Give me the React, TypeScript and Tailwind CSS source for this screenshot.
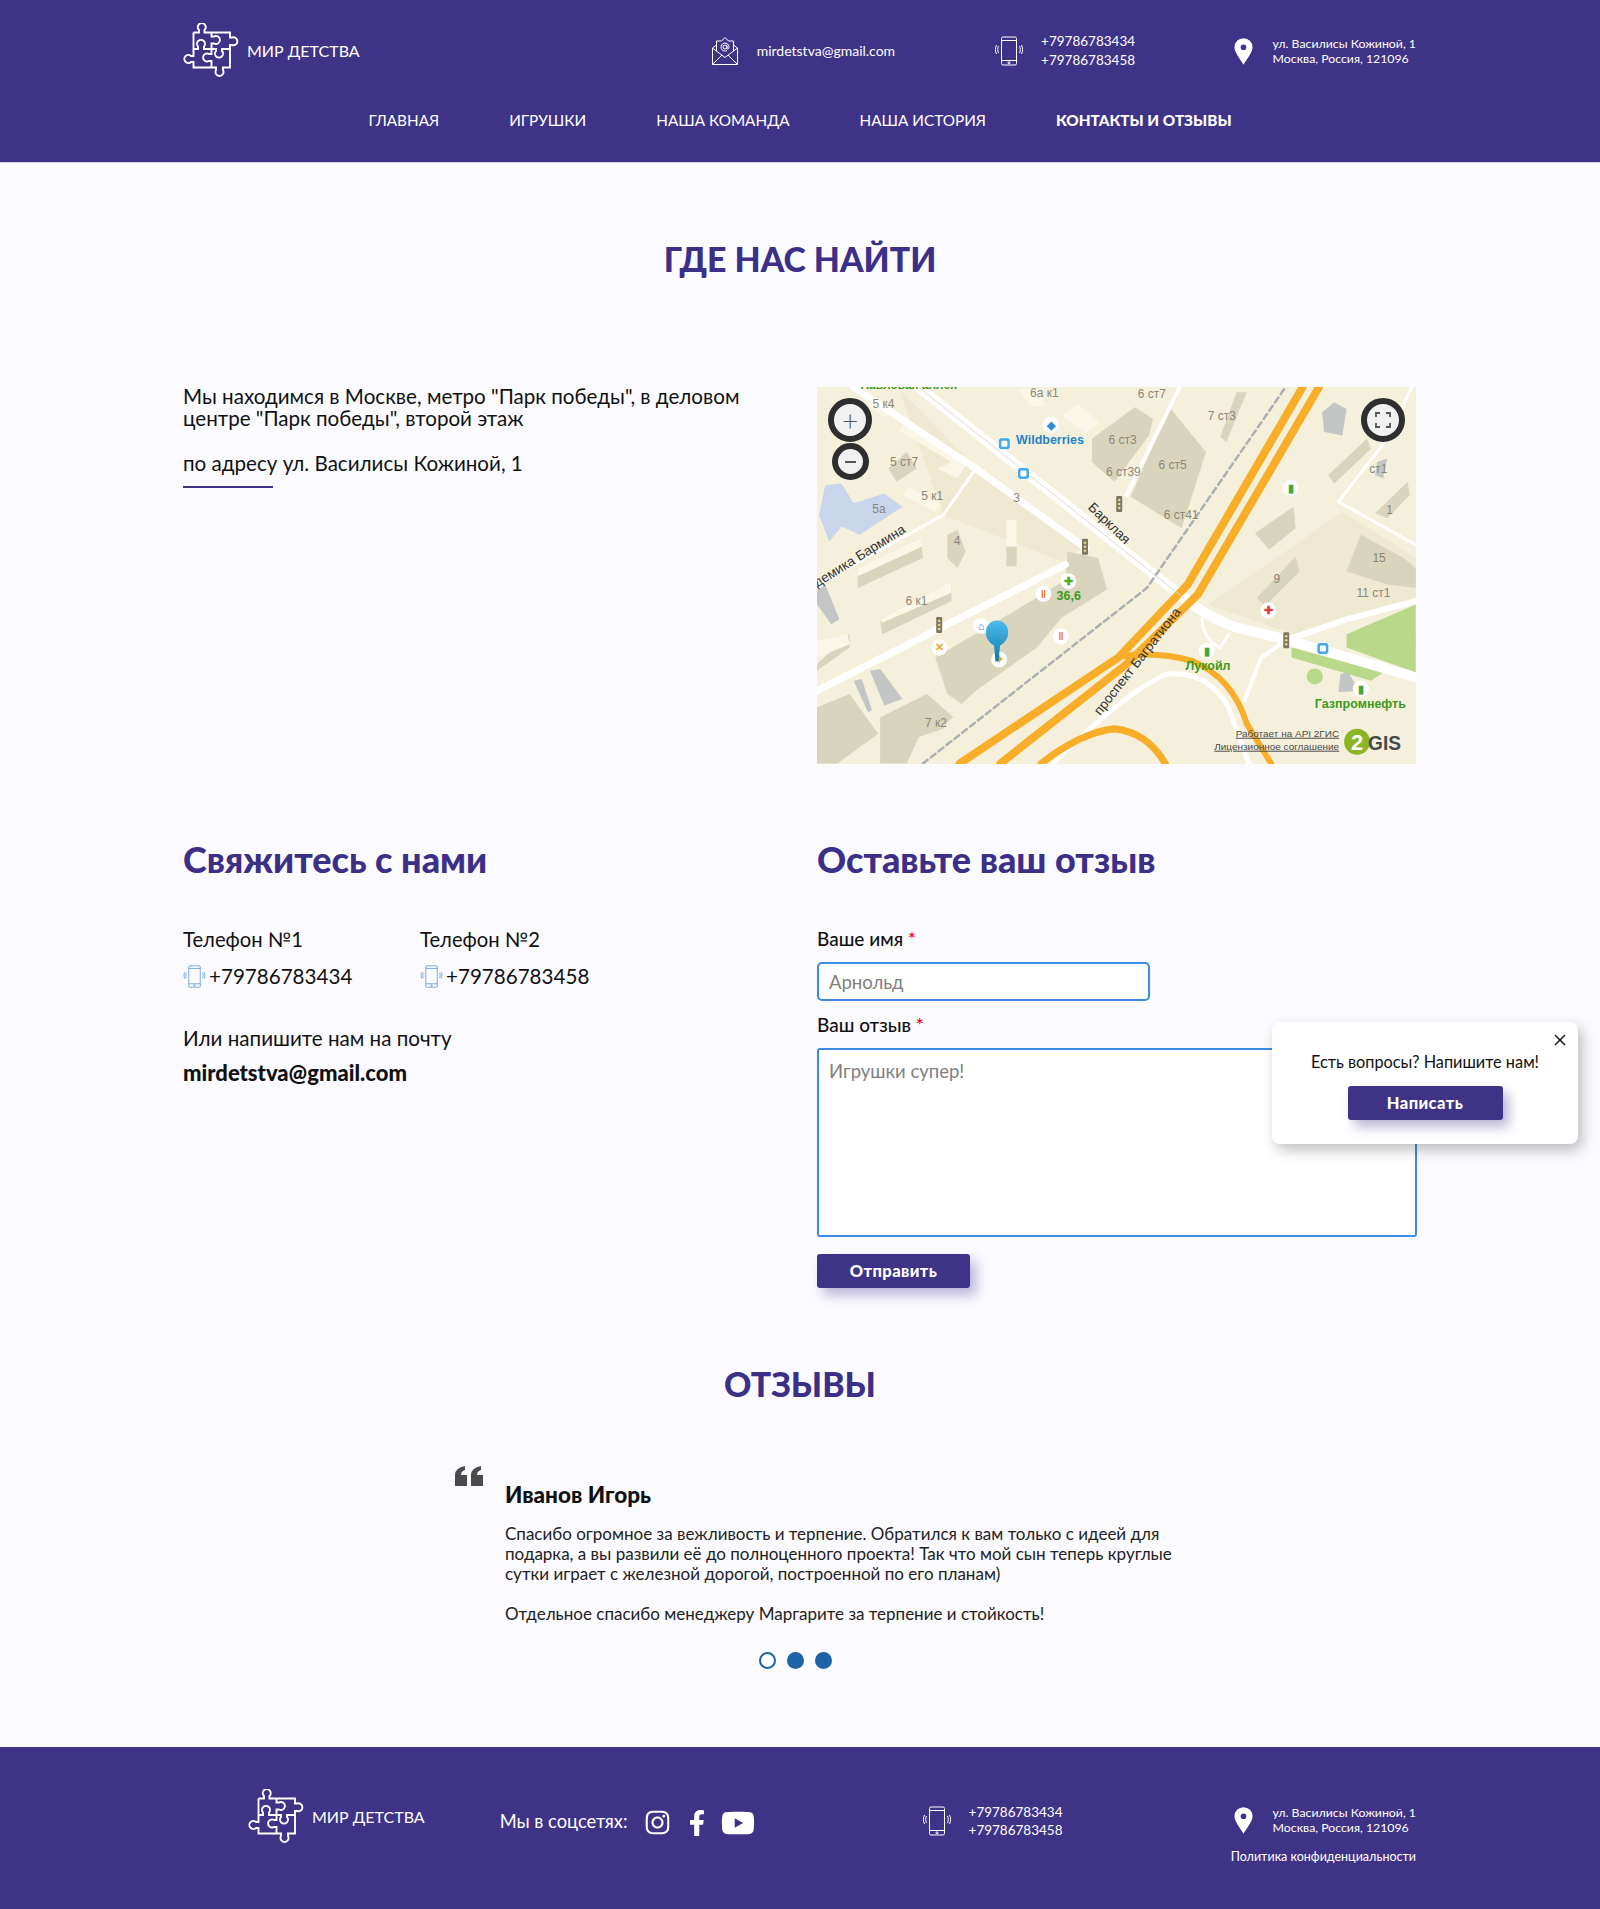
import { FaFacebookF, FaInstagram, FaYoutube } from "react-icons/fa";
import { X } from "lucide-react";

const Logo = () => (
  <svg viewBox="0 0 56 56" className="w-14 h-14 shrink-0" fill="none" stroke="white" strokeWidth="1.9">
    <path d="M10.500 9.500H16V7A4 4 0 1 1 21.500 7V9.500H47V14.500H49A4 4 0 1 1 49 22H47V44.500H40V47A4 4 0 1 1 33 47V44.500H10.500V39H8A4 4 0 1 1 8 33H10.500V9.500" />
    <path d="M10.500 26H15V23.500A4 4 0 1 1 21 23.500V26H28.500" />
    <path d="M28.500 9.500V13.500H31A4 4 0 1 1 31 20.500H28.500V26" />
    <path d="M28.500 26V31H26A4 4 0 1 0 26 38H28.500V44.500" />
    <path d="M28.500 26H33V28A4 4 0 1 0 39 28V26H47" />
  </svg>
);

const PhoneIcon = ({ className }: { className: string }) => (
  <svg viewBox="0 0 28 30" className={className} fill="none" stroke="currentColor" strokeWidth="1">
    <rect x="6.500" y="1" width="15" height="28" rx="1.500" />
    <path d="M6.500 4.500h15M6.500 24.500h15" />
    <circle cx="14" cy="26.800" r="1" />
    <path d="M3.500 10c-1 2-1 5 0 7M1.500 9c-1.500 3-1.500 6 0 9M24.500 10c1 2 1 5 0 7M26.500 9c1.500 3 1.500 6 0 9" />
  </svg>
);

const MailIcon = () => (
  <svg viewBox="0 0 28 30" className="w-7 h-[30px] shrink-0" fill="none" stroke="white" strokeWidth="1">
    <path d="M1.500 12v16.500h25V12L14 21.500z" />
    <path d="M1.500 28.500L11 19M26.500 28.500L17 19M1.500 12l4-3M26.500 12l-4-3M5.500 15V5h5l3.500-3.500L17.500 5h5v10" />
    <circle cx="14" cy="11" r="2" />
    <path d="M16 9.500v3c0 1 2 1 2-1.500a4 4 0 1 0-2 3.500" />
  </svg>
);

const PinIcon = () => (
  <svg viewBox="0 0 20 28" className="w-[19px] h-[27px] shrink-0">
    <path fill="white" fillRule="evenodd" d="M10 0a9.500 9.500 0 0 0-9.500 9.500C.5 15 6 21 10 28c4-7 9.500-13 9.500-18.500A9.500 9.500 0 0 0 10 0zm0 6.500a3 3 0 1 1 0 6 3 3 0 0 1 0-6z" />
  </svg>
);

const Brand = () => (
  <div className="flex items-center gap-2">
    <Logo />
    <span className="text-base text-white">МИР ДЕТСТВА</span>
  </div>
);

const Address = () => (
  <div className="flex items-center gap-[20px]">
    <PinIcon />
    <p className="text-[12.300px] leading-[15px] text-white">
      ул. Василисы Кожиной, 1<br />Москва, Россия, 121096
    </p>
  </div>
);

// map shapes are traced in 1470x1135 units, then squeezed onto the 600x377 tile
const buildings = [
  "330,860 580,680 650,625 655,540 730,560 752,655 640,740 580,830 430,960 395,1000 360,970",
  "715,200 820,105 865,140 855,190 770,330 715,270",
  "810,375 905,105 995,240 935,470",
  "140,590 295,500 300,560 140,650",
  "195,745 370,630 370,690 200,790",
  "40,1010 120,970 190,1090 90,1180 40,1180",
  "195,1040 310,970 375,1040 290,1100 260,1180 195,1180",
  "1115,485 1210,405 1215,470 1150,535",
  "1120,680 1215,555 1225,600 1140,705",
  "1340,600 1375,490 1480,560 1510,590 1510,650 1440,640",
  "1410,425 1490,330 1495,370 1440,440",
  "360,490 385,475 405,540 385,590 360,560",
  "505,525 530,525 530,585 505,585",
  "1295,310 1390,200 1400,230 1310,335",
  "215,290 260,240 285,290 235,330",
  "1030,195 1070,60 1095,60 1045,210",
  "285,1090 370,1040 350,1075 290,1100",
  "40,880 120,790 120,830 40,900",
];
const paleBlocks = [
  "265,145 410,270 385,320 335,290 370,270 240,175",
  "195,745 370,630 370,665 200,755",
  "140,590 295,500 298,525 140,615",
  "505,445 530,445 530,525 505,525",
  "640,130 680,95 735,150 700,185",
  "530,50 590,50 600,105 565,100",
  "265,345 345,400 330,420 250,370",
  "180,85 225,120 205,135 165,100",
  "40,810 115,790 120,820 40,860",
];
const greyBlocks = [
  "170,900 195,895 250,985 205,1005",
  "1280,120 1310,90 1340,110 1330,190 1285,180",
  "40,660 60,640 95,745 75,760 40,700",
  "1325,910 1345,905 1370,960 1320,965",
  "1415,270 1440,260 1430,320 1410,310",
  "130,930 150,925 175,1020 165,1025",
];

const t = (x: number, y: number) => `translate(${(x - 40) * 0.408},${(y - 45) * 0.332})`;

const spots = [
  { x: 614, y: 158, c: "#2a8fd6", s: "◆" },
  { x: 657, y: 630, c: "#4caf22", s: "✚" },
  { x: 596, y: 668, c: "#ef7d28", s: "‖" },
  { x: 639, y: 796, c: "#ef7d28", s: "‖" },
  { x: 340, y: 830, c: "#eda91f", s: "✕" },
  { x: 487, y: 866, c: "#eda91f", s: "✦" },
  { x: 1203, y: 348, c: "#3fa83a", s: "▮" },
  { x: 1148, y: 718, c: "#e23b3b", s: "✚" },
  { x: 997, y: 840, c: "#3fa83a", s: "▮" },
  { x: 1375, y: 955, c: "#3fa83a", s: "▮" },
  { x: 443, y: 765, c: "#2a8fd6", s: "⌂" },
];
const lights = [[782, 397], [698, 526], [340, 762], [1192, 808]];
const stops = [[500, 215], [547, 305], [1282, 833]];
const labels: [string, number, number][] = [
  ["5 к4", 203, 95], ["6а к1", 598, 62], ["6 ст7", 862, 64], ["7 ст3", 1034, 131], ["6 ст3", 790, 204],
  ["5 ст7", 254, 271], ["6 ст39", 792, 300], ["6 ст5", 913, 278], ["5 к1", 323, 374], ["5а", 192, 412],
  ["3", 530, 380], ["6 ст41", 934, 431], ["4", 384, 510], ["6 к1", 284, 690], ["7 к2", 332, 1058],
  ["9", 1169, 624], ["15", 1420, 560], ["11 ст1", 1406, 665], ["1", 1446, 414], ["ст1", 1418, 290],
];

const MapTile = () => (
  <div className="relative w-[599px] h-[377px] overflow-hidden bg-[#f5f0dc]">
    <svg viewBox="0 0 600 377" className="w-full h-full font-['Liberation_Sans',sans-serif]">
      <defs>
        <linearGradient id="pin" x1="0" y1="0" x2="0" y2="1">
          <stop offset="0" stopColor="#4dbcec" />
          <stop offset="1" stopColor="#0b78ab" />
        </linearGradient>
      </defs>
      <g transform="translate(-16.3,-14.9) scale(0.408,0.332)" fill="none" strokeLinecap="round" strokeLinejoin="round">
        <polygon points="240,45 430,290 690,530 640,570 350,430" fill="#efe9d2" />
        <polygon points="1000,700 1190,540 1330,420 1510,560 1510,700 1210,790" fill="#efe9d2" />
        <polygon points="1340,790 1510,700 1510,905 1430,870 1340,830" fill="#b9d98a" />
        <polygon points="1205,830 1430,905 1400,930 1260,880 1205,860" fill="#b9d98a" />
        <ellipse cx="1262" cy="917" rx="20" ry="24" fill="#b9d98a" />
        {buildings.map((b) => <polygon key={b} points={b} fill="#d9d4bc" />)}
        {paleBlocks.map((b) => <polygon key={b} points={b} fill="#fbf7e8" />)}
        {greyBlocks.map((b) => <polygon key={b} points={b} fill="#c4c6c6" />)}
        <polygon points="60,340 100,335 130,395 205,365 250,405 145,490 100,465 70,510 45,430" fill="#c9d5ea" />
        <g stroke="#ffffff">
          {[
            { d: "M130 45L430 290L700 530", w: 7 },
            { d: "M290 45L940 680Q1000 740 1070 770L1190 805L1510 920", w: 10 },
            { d: "M40 960L650 580", w: 7 },
            { d: "M40 640L350 430L430 290", w: 3 },
            { d: "M930 45L800 370", w: 4 },
            { d: "M1510 520L1320 390L1440 200L1500 45", w: 3 },
            { d: "M1210 800L1340 745L1510 690", w: 6 },
            { d: "M620 1180Q800 960 900 910Q1000 900 1050 1010L1100 1180", w: 5 },
            { d: "M1090 990L1130 860L1190 810", w: 4 },
            { d: "M985 745Q990 810 1030 830L1050 790", w: 3 },
          ].map((r) => <path key={r.d} d={r.d} strokeWidth={r.w} vectorEffect="non-scaling-stroke" />)}
        </g>
        <path d="M300 1180L850 650L1190 45" stroke="#aab0b4" strokeWidth="2.500" strokeDasharray="6 4" vectorEffect="non-scaling-stroke" />
        <g stroke="#f9ae2a" strokeWidth="8">
          <path d="M1232 45L950 640L780 860L390 1180" vectorEffect="non-scaling-stroke" />
          <path d="M1272 45L975 670L800 880L490 1180" vectorEffect="non-scaling-stroke" />
          <path d="M780 858Q870 840 960 870Q1060 920 1095 1060L1155 1180" strokeWidth="6" vectorEffect="non-scaling-stroke" />
          <path d="M590 1180Q690 1085 770 1075Q850 1085 895 1180" strokeWidth="7" vectorEffect="non-scaling-stroke" />
        </g>
        <path d="M290 45L940 680" stroke="#dcd8c8" strokeWidth="1" vectorEffect="non-scaling-stroke" />
      </g>

      {lights.map(([x, y]) => (
        <g key={x} transform={t(x, y)}>
          <rect x="-3" y="-8" width="6" height="16" rx="1" fill="#7d7767" />
          <circle cy="-4" r="1.300" fill="#e9d77a" />
          <circle cy="0" r="1.300" fill="#e9d77a" />
          <circle cy="4" r="1.300" fill="#e9d77a" />
        </g>
      ))}
      {stops.map(([x, y]) => (
        <g key={x} transform={t(x, y)}>
          <rect x="-6" y="-6" width="12" height="12" rx="3" fill="#46a8e6" stroke="white" />
          <rect x="-3" y="-3" width="6" height="6" rx="1" fill="white" />
        </g>
      ))}
      {spots.map((s) => (
        <g key={s.x} transform={t(s.x, s.y)}>
          <circle r="8" fill="white" />
          <text y="4" textAnchor="middle" fontSize="11" fontWeight="700" fill={s.c}>{s.s}</text>
        </g>
      ))}
      {labels.map(([s, x, y]) => (
        <text key={s} transform={t(x, y)} textAnchor="middle" y="4" fontSize="12" fill="#8c8778">{s}</text>
      ))}
      <g fontSize="13.500" fill="#333">
        <text transform={`${t(750, 465)} rotate(44)`} textAnchor="middle">Барклая</text>
        <text transform={`${t(150, 565)} rotate(-32)`} textAnchor="middle">демика Бармина</text>
        <text transform={`${t(835, 880)} rotate(-52)`} textAnchor="middle">проспект Багратиона</text>
      </g>
      <text x="92" y="2" textAnchor="middle" fontSize="12" fontWeight="700" fill="#3d9a1c">Павловая аллея</text>
      <text transform={t(612, 217)} textAnchor="middle" fontSize="12.500" fontWeight="700" fill="#1f83c7">Wildberries</text>
      <g fontSize="12.500" fontWeight="700" fill="#3d9a1c" textAnchor="middle">
        <text transform={t(658, 688)}>36,6</text>
        <text transform={t(1000, 898)}>Лукойл</text>
        <text transform={t(1374, 1012)}>Газпромнефть</text>
      </g>
      <g fontSize="10" fill="#4a4a4a" textAnchor="end" textDecoration="underline">
        <text x="523" y="350">Работает на API 2ГИС</text>
        <text x="523" y="363">Лицензионное соглашение</text>
      </g>
      <circle cx="541" cy="355" r="13" fill="#8cb526" />
      <text x="535" y="363" fontSize="22" fontWeight="700" fill="white">2</text>
      <text x="552" y="363" fontSize="21" fontWeight="700" fill="#46494b" textLength="33" lengthAdjust="spacingAndGlyphs">GIS</text>
      <g transform={t(482, 800)}>
        <path d="M-1.500 24L-3 8Q-12 3-11 -6A11 11 0 1 1 11 -6Q12 3 3 8L1.500 24z" fill="url(#pin)" />
      </g>
    </svg>
    <div className="absolute left-[11px] top-[11px] w-[44px] h-[44px] rounded-full border-[6px] border-[#2e2e2e] bg-[#f1f1f1] flex items-center justify-center text-[#555] text-[28px] leading-none font-light">+</div>
    <div className="absolute left-[15px] top-[56px] w-[37px] h-[37px] rounded-full border-[6px] border-[#2e2e2e] bg-[#f1f1f1] flex items-center justify-center">
      <span className="w-[11px] h-[2px] bg-[#555]" />
    </div>
    <div className="absolute right-[11px] top-[11px] w-[44px] h-[44px] rounded-full border-[6px] border-[#2e2e2e] bg-[#f1f1f1] flex items-center justify-center">
      <svg viewBox="0 0 16 16" className="w-4 h-4" fill="none" stroke="#555" strokeWidth="1.800">
        <path d="M1 5V1h4M11 1h4v4M15 11v4h-4M5 15H1v-4" />
      </svg>
    </div>
  </div>
);

const Req = () => <span className="text-[#f00]"> *</span>;

export default function App() {
  const brand = "bg-[#3f3387]";
  return (
    <div className="relative w-[1600px] h-[1909px] overflow-hidden bg-[#fafaff] font-['Lato','Noto_Sans',sans-serif] text-[#111]">
      <header className={`${brand} h-[163px] border-b border-[#d5d3e4]`}>
        <div className="w-[1233px] ml-[183px] pt-[23px] flex items-center h-[79px]">
          <Brand />
          <div className="ml-[351px] flex items-center gap-[18px]">
            <MailIcon />
            <span className="text-sm text-white">mirdetstva@gmail.com</span>
          </div>
          <div className="ml-[100px] flex items-center gap-[18px]">
            <PhoneIcon className="w-7 h-[30px] text-white" />
            <p className="text-[13.500px] leading-[19px] text-white">+79786783434<br />+79786783458</p>
          </div>
          <div className="ml-auto"><Address /></div>
        </div>
        <nav className="mt-[30px] flex justify-center gap-[70px] text-[15.300px] text-white">
          <a>ГЛАВНАЯ</a>
          <a>ИГРУШКИ</a>
          <a>НАША КОМАНДА</a>
          <a>НАША ИСТОРИЯ</a>
          <a className="font-black">КОНТАКТЫ И ОТЗЫВЫ</a>
        </nav>
      </header>

      <main className="w-[1234px] ml-[183px]">
        <h1 className="mt-[75px] text-center text-[33.800px] leading-[42px] font-black text-[#3b2f87]">ГДЕ НАС НАЙТИ</h1>

        <section className="mt-[107px] grid grid-cols-[634px_600px]">
          <div className="text-[20.600px] leading-[22px] -mt-[2px]">
            <p>Мы находимся в Москве, метро "Парк победы", в деловом<br />центре "Парк победы", второй этаж</p>
            <p className="mt-[23px]">по адресу ул. Василисы Кожиной, 1</p>
            <div className="mt-[12px] w-[90px] h-[2px] bg-[#3f3387]" />
          </div>
          <MapTile />
        </section>

        <section className="mt-[74px] grid grid-cols-[634px_600px]">
          <div>
            <h2 className="text-[36px] leading-[42px] font-black text-[#3b2f87]">Свяжитесь с нами</h2>
            <div className="mt-[47px] flex gap-[56px] text-[20.600px] leading-[24px]">
              <div className="w-[181px]">
                <p className="text-[20.200px]">Телефон №1</p>
                <p className="mt-[13px] flex items-center gap-[3px]"><PhoneIcon className="w-[23px] h-[23px] text-[#5b94cf]" />+79786783434</p>
              </div>
              <div>
                <p className="text-[20.200px]">Телефон №2</p>
                <p className="mt-[13px] flex items-center gap-[3px]"><PhoneIcon className="w-[23px] h-[23px] text-[#5b94cf]" />+79786783458</p>
              </div>
            </div>
            <p className="mt-[38px] text-[20.600px] leading-[24px]">Или напишите нам на почту</p>
            <p className="mt-[11px] text-[22px] leading-[24px] font-black">mirdetstva@gmail.com</p>
          </div>
          <form>
            <h2 className="text-[36px] leading-[42px] font-black text-[#3b2f87]">Оставьте ваш отзыв</h2>
            <label className="mt-[47px] block text-[19px] leading-[24px] font-medium">Ваше имя<Req /></label>
            <input
              placeholder="Арнольд"
              className="mt-[11px] block w-[333px] h-[39px] px-[10px] bg-white border-2 border-[#3a8ce4] rounded-[5px] text-[18.500px] placeholder-[#808080] outline-none"
            />
            <label className="mt-[12px] block text-[19px] leading-[24px] font-medium">Ваш отзыв<Req /></label>
            <textarea
              placeholder="Игрушки супер!"
              className="mt-[11px] block w-[600px] h-[189px] px-[10px] py-[8px] bg-white border-2 border-[#3a8ce4] rounded-[3px] text-[18.500px] placeholder-[#808080] outline-none resize-none"
            />
            <button type="button" className="mt-[17px] w-[153px] h-[34px] rounded-[3px] bg-[#3f3387] text-white text-[16.500px] tracking-wide font-black shadow-[6px_7px_12px_rgba(63,51,135,0.35)]">Отправить</button>
          </form>
        </section>

        <h2 className="mt-[75px] text-center text-[33.800px] leading-[42px] font-black text-[#3b2f87]">ОТЗЫВЫ</h2>

        <section className="mt-[61px] ml-[272px] flex">
          <svg viewBox="0 0 28 20" className="w-[28px] h-[20px] shrink-0 fill-[#4a4a4a]">
            <path d="M0 20V9Q0 2 10 0V4Q6 5 6 9H12V20zM16 20V9Q16 2 26 0V4Q22 5 22 9H28V20z" />
          </svg>
          <div className="ml-[22px] mt-[16px] w-[700px]">
            <h3 className="text-[22.500px] leading-[26px] font-black">Иванов Игорь</h3>
            <div className="mt-[16px] text-[17px] leading-[20px] text-[#222]">
              <p>Спасибо огромное за вежливость и терпение. Обратился к вам только с идеей для<br />подарка, а вы развили её до полноценного проекта! Так что мой сын теперь круглые<br />сутки играет с железной дорогой, построенной по его планам)</p>
              <p className="mt-[20px]">Отдельное спасибо менеджеру Маргарите за терпение и стойкость!</p>
            </div>
          </div>
        </section>

        <div className="mt-[28px] ml-[576px] flex gap-[11px]">
          <span className="w-[17px] h-[17px] rounded-full border-2 border-[#1d63a8] bg-white" />
          <span className="w-[17px] h-[17px] rounded-full bg-[#1d63a8]" />
          <span className="w-[17px] h-[17px] rounded-full bg-[#1d63a8]" />
        </div>
      </main>

      <footer className={`${brand} absolute bottom-0 inset-x-0 h-[162px] pl-[248px] pr-[184px] pt-[42px] text-white`}>
        <div className="flex items-center h-[60px]">
          <div className="-mt-[4px]"><Brand /></div>
          <span className="ml-[75px] mt-[5px] text-[18.300px]">Мы в соцсетях:</span>
          <div className="ml-[16px] mt-[7px] flex items-center">
            <FaInstagram className="w-[27px] h-[27px]" />
            <FaFacebookF className="ml-[16px] w-[20px] h-[26px]" />
            <FaYoutube className="ml-[14px] w-[34px] h-[32px]" />
          </div>
          <div className="ml-[168px] mt-[3px] flex items-center gap-[18px]">
            <PhoneIcon className="w-7 h-[30px] text-white" />
            <p className="text-[13.500px] leading-[18px]">+79786783434<br />+79786783458</p>
          </div>
          <div className="ml-auto mt-[2px]"><Address /></div>
        </div>
        <p className="-mt-[1px] text-right text-[12.500px]">Политика конфиденциальности</p>
      </footer>

      <aside className="absolute left-[1272px] top-[1022px] w-[306px] h-[122px] rounded-lg bg-white shadow-[4px_6px_14px_rgba(0,0,0,0.25)] flex flex-col items-center pt-[30px]">
        <X className="absolute right-[9px] top-[9px] w-[18px] h-[18px]" strokeWidth={2} />
        <p className="text-[16.300px] leading-[20px]">Есть вопросы? Напишите нам!</p>
        <button className="mt-[14px] w-[155px] h-[34px] rounded-[3px] bg-[#3f3387] text-white text-[16.500px] tracking-wide font-black shadow-[6px_7px_12px_rgba(63,51,135,0.35)]">Написать</button>
      </aside>
    </div>
  );
}
